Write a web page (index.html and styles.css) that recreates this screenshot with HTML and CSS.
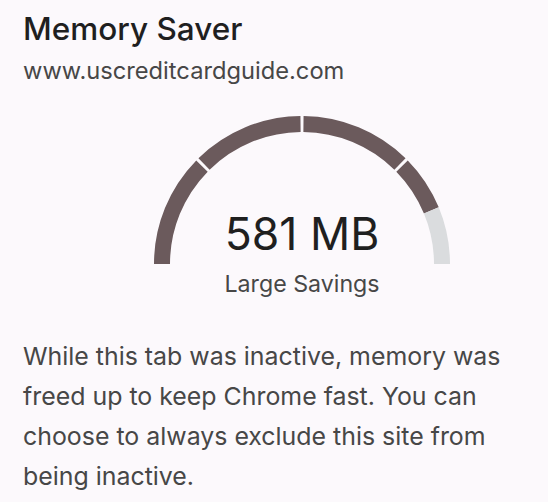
FILE: index.html
```html
<!DOCTYPE html>
<html lang="en">
<head>
  <meta charset="UTF-8" />
  <title>Memory Saver</title>
  <link rel="stylesheet" href="styles.css">
</head>
<body>
  <main class="bubble">
    <h1 class="title">Memory Saver</h1>
    <p class="site">www.uscreditcardguide.com</p>

    <div class="gauge">
      <svg class="gauge-arc" width="300" height="148" viewBox="0 0 300 148">
        <!-- filled segments, small gaps between -->
        <path d="M10 148 A140 140 0 0 1 49.97 50.04" />
        <path d="M52.04 47.97 A140 140 0 0 1 148.53 8.01" />
        <path d="M151.47 8.01 A140 140 0 0 1 247.96 47.97" />
        <path d="M250.03 50.04 A140 140 0 0 1 279.34 94.42" />
        <path class="rest" d="M279.34 94.42 A140 140 0 0 1 290 148" />
      </svg>
      <div class="gauge-value">581 MB</div>
      <div class="gauge-label">Large Savings</div>
    </div>

    <p class="info">While this tab was inactive, memory was freed up to keep Chrome fast. You can choose to always exclude this site from being inactive.</p>
  </main>
</body>
</html>
```

FILE: styles.css
```css
body {
  margin: 0;
  background: #fcf9fc;
  font-family: Inter, "Noto Sans", sans-serif;
}

.bubble {
  padding: 10px 23px 0;
}

.title {
  margin: 0;
  font-size: 31.5px;
  line-height: 38px;
  font-weight: 500;
  color: #1f1f1f;
}

.site {
  margin: 8px 0 0;
  font-size: 23.7px;
  line-height: 30px;
  color: #474747;
}

.gauge {
  display: grid;
  justify-items: center;
  margin-top: 30px;
  margin-left: 56px;
}

.gauge-arc {
  grid-row: 1;
  grid-column: 1;
}

.gauge-arc path {
  fill: none;
  stroke: #6b5a5c;
  stroke-width: 16;
}

.gauge-arc path.rest {
  stroke: #dadcde;
}

.gauge-value {
  grid-row: 1;
  grid-column: 1;
  align-self: end;
  margin-bottom: 6px;
  font-size: 44.5px;
  line-height: 48px;
  color: #1f1f1f;
}

.gauge-label {
  margin-top: 6px;
  font-size: 23.2px;
  line-height: 28px;
  color: #474747;
}

.info {
  margin: 38px 0 0;
  font-size: 24.9px;
  line-height: 40px;
  color: #474747;
}
```
